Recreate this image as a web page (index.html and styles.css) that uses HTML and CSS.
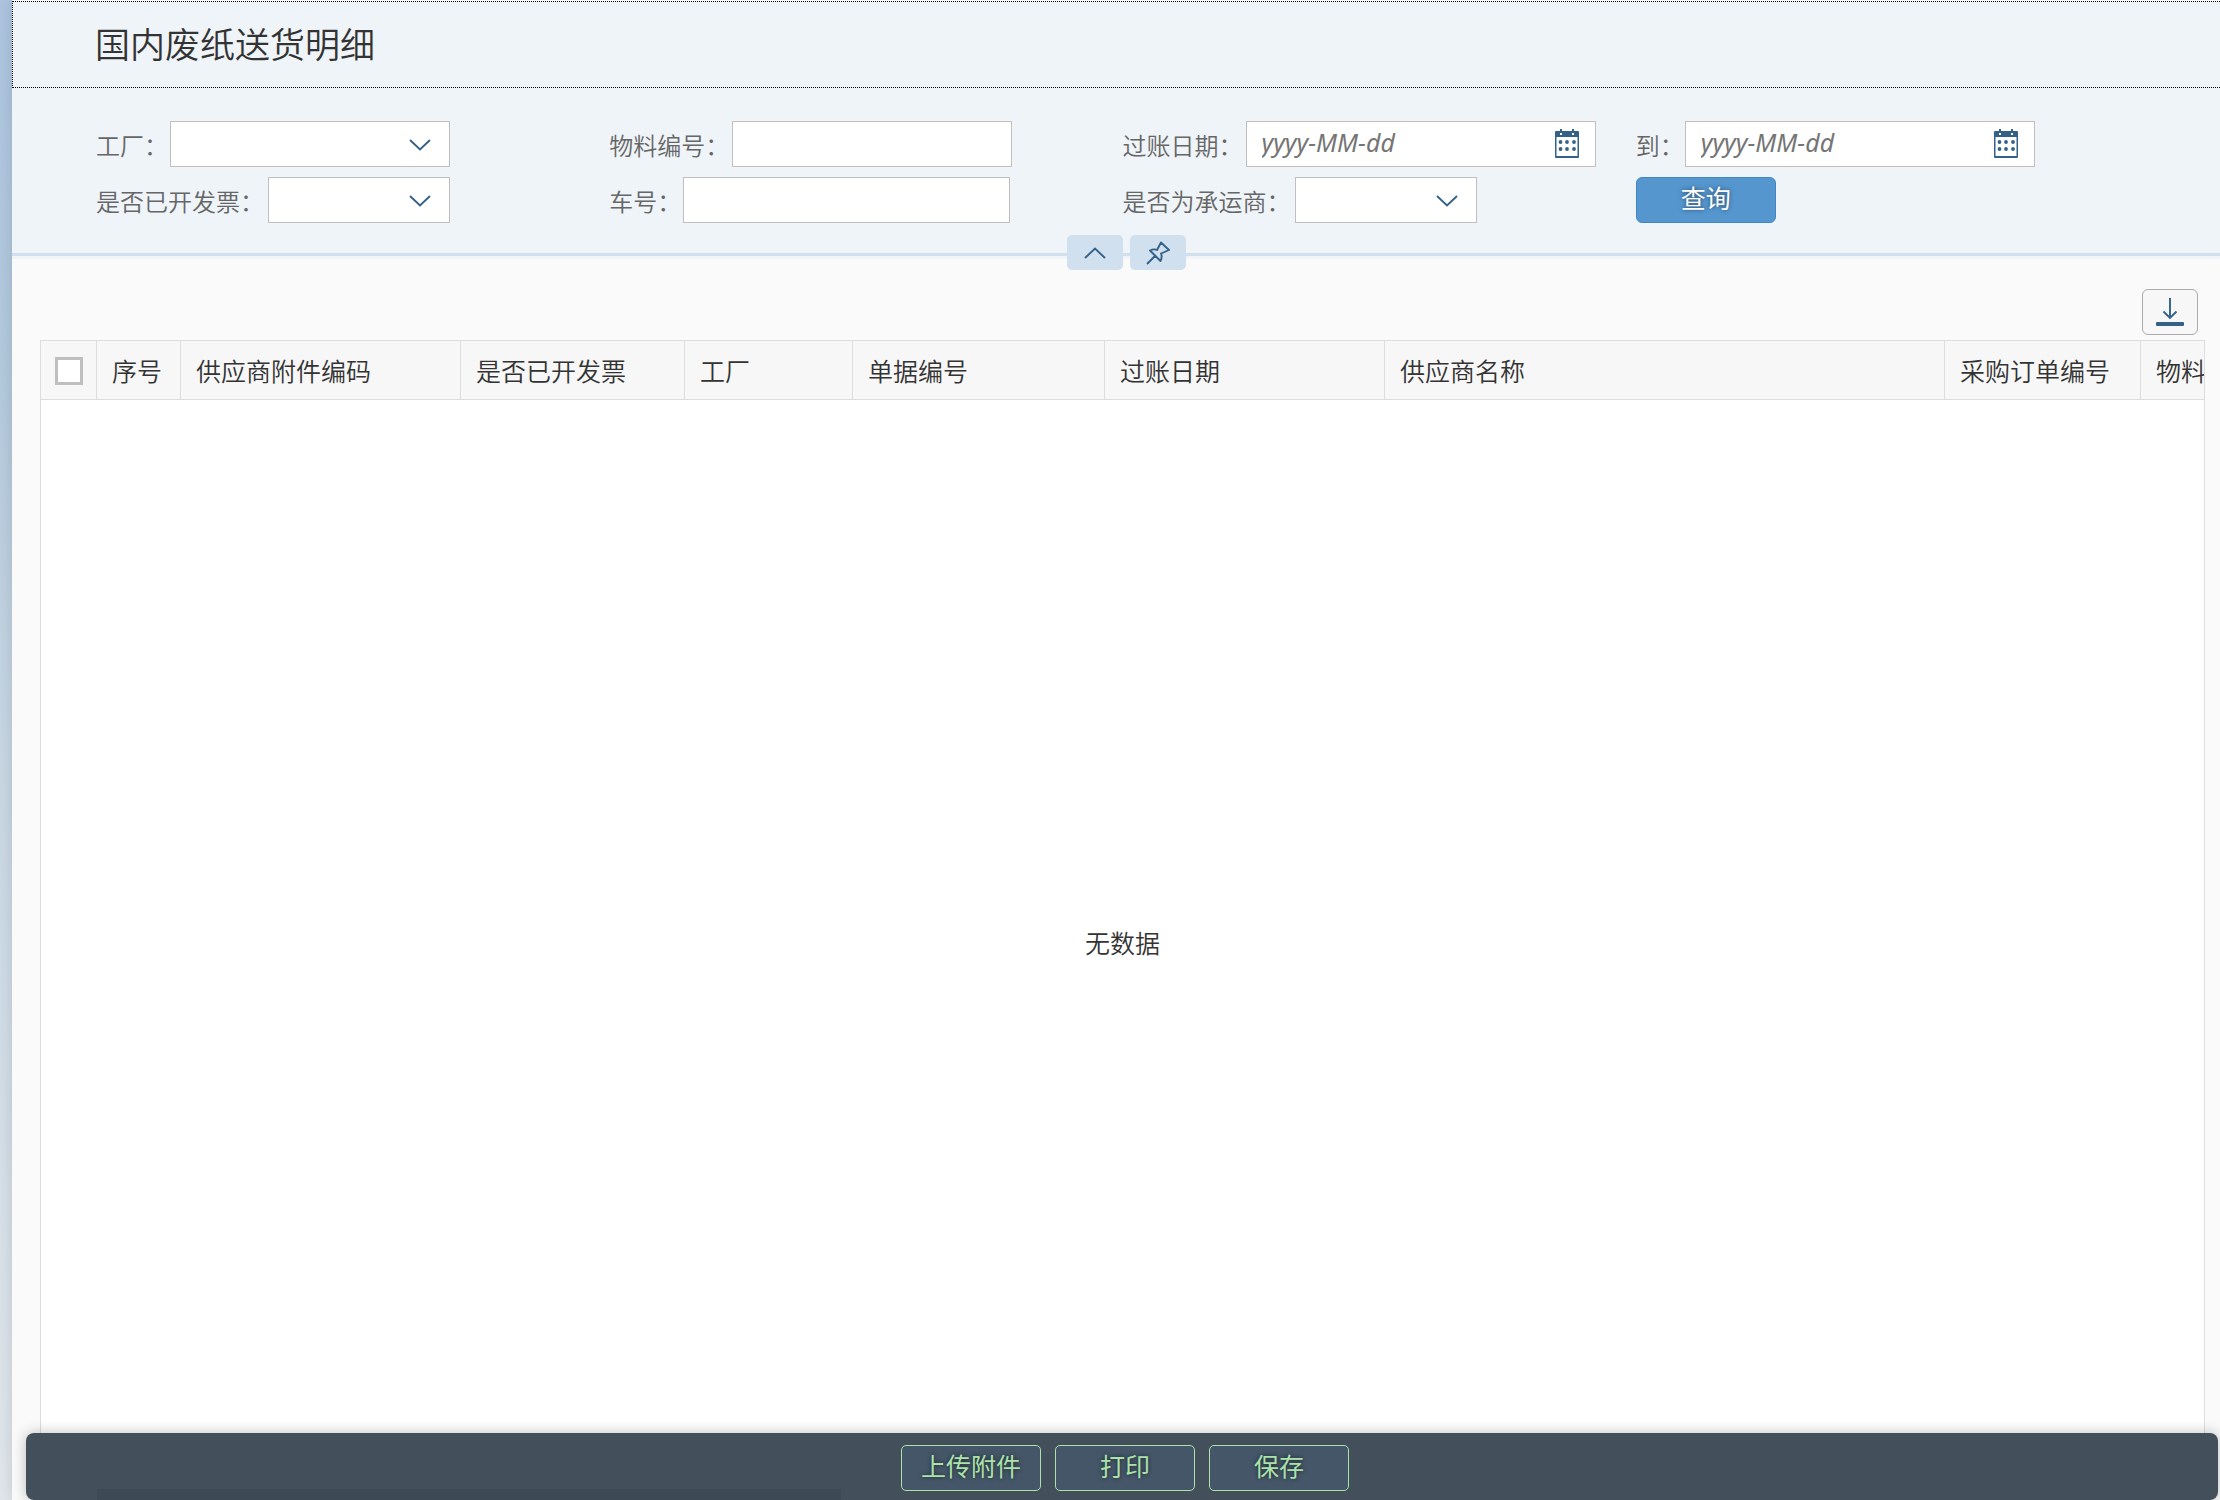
FILE: index.html
```html
<!DOCTYPE html>
<html lang="zh-CN">
<head>
<meta charset="utf-8">
<title>国内废纸送货明细</title>
<link rel="stylesheet" href="styles.css">
</head>
<body>
<svg class="defs" aria-hidden="true">
  <symbol id="chevron" viewBox="0 0 24 14"><path d="M2 2l10 9.500L22 2" fill="none" stroke="#346187" stroke-width="1.900"/></symbol>
  <symbol id="chevron-up" viewBox="0 0 24 14"><path d="M2 12L12 2.500l10 9.500" fill="none" stroke="#346187" stroke-width="1.900"/></symbol>
  <symbol id="calendar" viewBox="0 0 26 32">
    <path fill="#346187" fill-rule="evenodd" d="M2 2h4V0h2v2h10V0h2v2h4q1 0 1 1v25q0 1-1 1H2q-1 0-1-1V3q0-1 1-1zM2.500 8v19h21V8zM6 4v2h2V4zM18 4v2h2V4z"/>
    <g fill="#346187"><circle cx="6.500" cy="13" r="1.900"/><circle cx="13" cy="13" r="1.900"/><circle cx="20" cy="13" r="1.900"/><circle cx="6.500" cy="20" r="1.900"/><circle cx="13" cy="20" r="1.900"/><circle cx="20" cy="20" r="1.900"/></g>
  </symbol>
  <symbol id="pin" viewBox="0 0 24 24"><path d="M1 23L10 14M4 9.500Q8 7.500 11 9L15 1.500L23 9L15 12.500Q16.500 16 14.500 20Z" fill="none" stroke="#346187" stroke-width="1.900" stroke-linejoin="round"/></symbol>
  <symbol id="download" viewBox="0 0 28 30"><path d="M14 1v19M7.500 14.500l6.500 6.500 6.500-6.500" fill="none" stroke="#346187" stroke-width="1.900"/><rect y="25" width="28" height="4" rx="1" fill="#346187"/></symbol>
</svg>
<div class="page">
  <header class="title-bar"><h1>国内废纸送货明细</h1></header>
  <form class="filters">
    <div class="field">
      <label class="len-3" for="plant">工厂：</label>
      <div class="control w-280"><select id="plant"><option></option></select><svg class="arrow"><use href="#chevron"/></svg></div>
    </div>
    <div class="field">
      <label class="len-5" for="material">物料编号：</label>
      <div class="control w-280"><input id="material" type="text"></div>
    </div>
    <div class="field">
      <label class="len-5" for="from">过账日期：</label>
      <div class="control w-350"><input id="from" type="text" placeholder="yyyy-MM-dd"><svg class="calendar"><use href="#calendar"/></svg></div>
    </div>
    <div class="field">
      <label class="len-2" for="to">到：</label>
      <div class="control w-350"><input id="to" type="text" placeholder="yyyy-MM-dd"><svg class="calendar"><use href="#calendar"/></svg></div>
    </div>
    <div class="field">
      <label class="len-7" for="invoiced">是否已开发票：</label>
      <div class="control w-182"><select id="invoiced"><option></option></select><svg class="arrow"><use href="#chevron"/></svg></div>
    </div>
    <div class="field">
      <label class="len-3" for="truck">车号：</label>
      <div class="control w-327"><input id="truck" type="text"></div>
    </div>
    <div class="field">
      <label class="len-7" for="carrier">是否为承运商：</label>
      <div class="control w-182"><select id="carrier"><option></option></select><svg class="arrow"><use href="#chevron"/></svg></div>
    </div>
    <div class="field"><button class="search" type="button">查询</button></div>
    <div class="header-toggles">
      <button type="button" aria-label="收起"><svg class="icon-up"><use href="#chevron-up"/></svg></button>
      <button type="button" aria-label="固定"><svg class="icon-pin"><use href="#pin"/></svg></button>
    </div>
  </form>
  <main>
    <div class="toolbar"><button type="button" aria-label="导出"><svg><use href="#download"/></svg></button></div>
    <div class="grid">
      <table>
        <colgroup><col class="c-56"><col class="c-84"><col class="c-280"><col class="c-224"><col class="c-168"><col class="c-252"><col class="c-280"><col class="c-560"><col class="c-196"><col class="c-84"></colgroup>
        <thead><tr>
          <th class="pick"><input type="checkbox" aria-label="全选"></th>
          <th>序号</th><th>供应商附件编码</th><th>是否已开发票</th><th>工厂</th><th>单据编号</th><th>过账日期</th><th>供应商名称</th><th>采购订单编号</th><th>物料</th>
        </tr></thead>
      </table>
      <p class="empty">无数据</p>
    </div>
    <div class="scroll"><div class="thumb"></div></div>
  </main>
  <footer>
    <button type="button">上传附件</button>
    <button type="button">打印</button>
    <button type="button">保存</button>
  </footer>
</div>
</body>
</html>
```
FILE: styles.css
```css
* { box-sizing: border-box; }
body {
  margin: 0;
  height: 100vh;
  padding-left: 12px;
  overflow: hidden;
  background: linear-gradient(#abc3de, #b2c8dc 25%, #c6d5e1 50%, #dfe5ea);
  color: #333;
  font: 350 25px/32px "Noto Sans", "Noto Sans CJK SC", sans-serif;
}
button, input, select { font: inherit; color: inherit; }
button { padding: 0; display: flex; align-items: center; justify-content: center; }
.defs { position: absolute; width: 0; height: 0; }
.page {
  position: relative;
  height: 100%;
  display: flex;
  flex-direction: column;
  background: #fafafa;
  box-shadow: 0 0 12px rgba(0, 0, 0, .12);
}
.title-bar {
  margin-top: 1px;
  height: 87px;
  padding: 0 82px;
  border: 1px dotted #000;
  border-right: 0;
  background: #eff4f9;
  display: flex;
  align-items: center;
}
h1 { margin: 0; font-size: 35px; line-height: 48px; font-weight: 350; }
.filters {
  position: relative;
  display: grid;
  grid-template-columns: repeat(4, 1fr);
  row-gap: 10px;
  height: 168px;
  padding: 33px 71px 0 84px;
  align-content: start;
  background: #eff4f9;
  border-bottom: 3px solid #d1e0ee;
  box-shadow: 0 3px 0 #f0f4f8;
  color: #666;
}
.field { display: flex; height: 46px; }
label { padding-top: 9px; font-size: 24px; white-space: nowrap; }
.len-2 { width: 49px; }
.len-3 { width: 74px; }
.len-5 { width: 123px; }
.len-7 { width: 172px; }
.w-182 { width: 182px; }
.w-280 { width: 280px; }
.w-327 { width: 327px; }
.w-350 { width: 350px; }
.control { position: relative; }
.control input, .control select {
  appearance: none;
  width: 100%;
  height: 46px;
  padding: 0 15px 4px;
  border: 1px solid #bfbfbf;
  border-radius: 0;
  background: #fff;
}
.control input::placeholder { color: #757575; font-style: italic; font-weight: 400; }
.arrow { position: absolute; right: 18px; top: 17px; width: 24px; height: 14px; pointer-events: none; }
.calendar { position: absolute; right: 16px; top: 8px; width: 26px; height: 32px; }
.search {
  width: 140px;
  height: 46px;
  padding-bottom: 4px;
  border: 1px solid #4187c6;
  border-radius: 6px;
  background: #5596cf;
  color: #fff;
  font-weight: 400;
  text-shadow: 0 0 4px rgba(0, 0, 0, .5);
}
.header-toggles {
  position: absolute;
  left: 0;
  right: 0;
  top: 147px;
  padding-left: 21px;
  display: flex;
  justify-content: center;
  gap: 7px;
}
.header-toggles button { width: 56px; height: 35px; border: 0; border-radius: 5px; background: #d1e0ee; }
.icon-up { width: 24px; height: 14px; }
.icon-pin { width: 24px; height: 24px; }
main { flex: 1; padding: 0 15px 0 28px; display: flex; flex-direction: column; }
.toolbar { height: 84px; padding: 33px 7px 0 0; display: flex; justify-content: flex-end; }
.toolbar button { width: 56px; height: 46px; border: 1px solid #ababab; border-radius: 6px; background: #f7f7f7; }
.toolbar svg { width: 28px; height: 30px; }
.grid {
  flex: 1;
  display: flex;
  flex-direction: column;
  overflow: hidden;
  border: 1px solid #ddd;
  background: #fff;
}
table { table-layout: fixed; width: 2184px; border-collapse: separate; border-spacing: 0; }
.c-56 { width: 56px; }
.c-84 { width: 84px; }
.c-168 { width: 168px; }
.c-196 { width: 196px; }
.c-224 { width: 224px; }
.c-252 { width: 252px; }
.c-280 { width: 280px; }
.c-560 { width: 560px; }
th {
  height: 59px;
  padding: 2px 0 0 15px;
  border-right: 1px solid #ddd;
  border-bottom: 1px solid #ddd;
  background: #f7f7f7;
  text-align: left;
  font-weight: 350;
  white-space: nowrap;
}
th.pick { padding: 2px 0 0 14px; }
th input {
  appearance: none;
  display: block;
  margin: 0;
  width: 28px;
  height: 28px;
  border: 3px solid #bfbfbf;
  background: #fff;
}
.empty { flex: 1; margin: 0; padding-top: 2px; display: flex; align-items: center; justify-content: center; }
.scroll { height: 15px; padding: 4px 0 0 57px; }
.thumb { width: 744px; height: 11px; background: #888; }
footer {
  position: absolute;
  left: 14px;
  right: 2px;
  bottom: 0;
  height: 67px;
  padding: 12px 0 0 6px;
  display: flex;
  justify-content: center;
  gap: 14px;
  border-radius: 8px;
  background: rgba(57, 70, 81, .95);
  box-shadow: 0 0 14px rgba(0, 0, 0, .25);
}
footer button {
  width: 140px;
  height: 46px;
  padding-bottom: 4px;
  border: 1px solid #abe2ab;
  border-radius: 5px;
  background: #445668;
  color: #abe2ab;
  font-weight: 400;
  text-shadow: 0 0 4px rgba(0, 0, 0, .6);
}
```
